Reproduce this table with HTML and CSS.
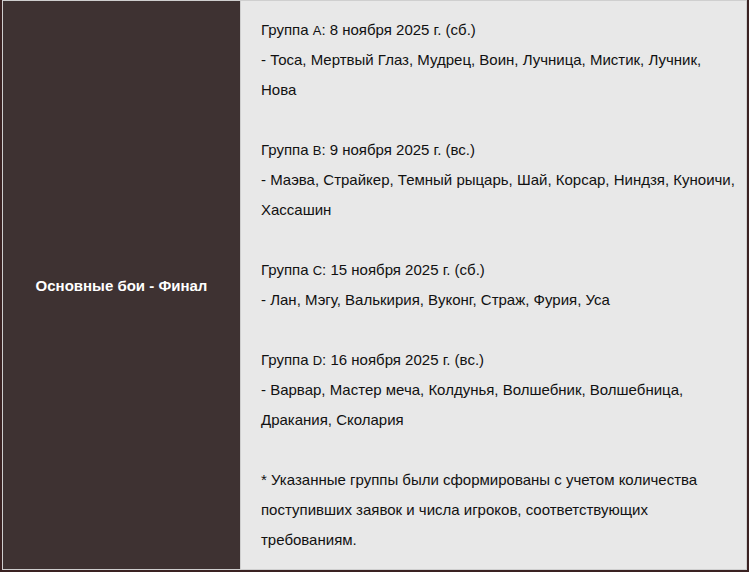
FILE: index.html
```html
<!DOCTYPE html>
<html lang="ru">
<head>
<meta charset="utf-8">
<link rel="stylesheet" href="styles.css">
</head>
<body>
<div class="table">
  <div class="label">Основные бои - Финал</div>
  <div class="content">
    <div class="group">
      <div>Группа <span class="sc">A</span>: 8 ноября 2025 г. (сб.)</div>
      <div>- Тоса, Мертвый Глаз, Мудрец, Воин, Лучница, Мистик, Лучник, Нова</div>
    </div>
    <div class="group">
      <div>Группа <span class="sc">B</span>: 9 ноября 2025 г. (вс.)</div>
      <div>- Маэва, Страйкер, Темный рыцарь, Шай, Корсар, Ниндзя, Куноичи, Хассашин</div>
    </div>
    <div class="group">
      <div>Группа <span class="sc">C</span>: 15 ноября 2025 г. (сб.)</div>
      <div>- Лан, Мэгу, Валькирия, Вуконг, Страж, Фурия, Уса</div>
    </div>
    <div class="group">
      <div>Группа <span class="sc">D</span>: 16 ноября 2025 г. (вс.)</div>
      <div>- Варвар, Мастер меча, Колдунья, Волшебник, Волшебница, Дракания, Сколария</div>
    </div>
    <div class="note">* Указанные группы были сформированы с учетом количества поступивших заявок и числа игроков, соответствующих требованиям.</div>
  </div>
</div>
</body>
</html>
```
FILE: styles.css
```css
html, body {
  margin: 0;
  padding: 0;
  background: #3a2222;
}
body {
  padding: 0 2px;
  font-family: "Liberation Sans", Arial, sans-serif;
  font-size: 15px;
}
.table {
  display: grid;
  grid-template-columns: 238px 1fr;
  border: 1px solid #cfcfcf;
  height: 570px;
  box-sizing: border-box;
}
.label {
  background: #3e3232;
  color: #ffffff;
  font-weight: bold;
  display: flex;
  align-items: center;
  justify-content: center;
  border-right: 1px solid #cfcfcf;
}
.content {
  background: #e8e8e8;
  color: #111111;
  line-height: 30px;
  padding: 14px 10px 13px 20px;
}
.group {
  margin-bottom: 30px;
}
.sc {
  font-size: 13px;
  line-height: 0;
}
```
